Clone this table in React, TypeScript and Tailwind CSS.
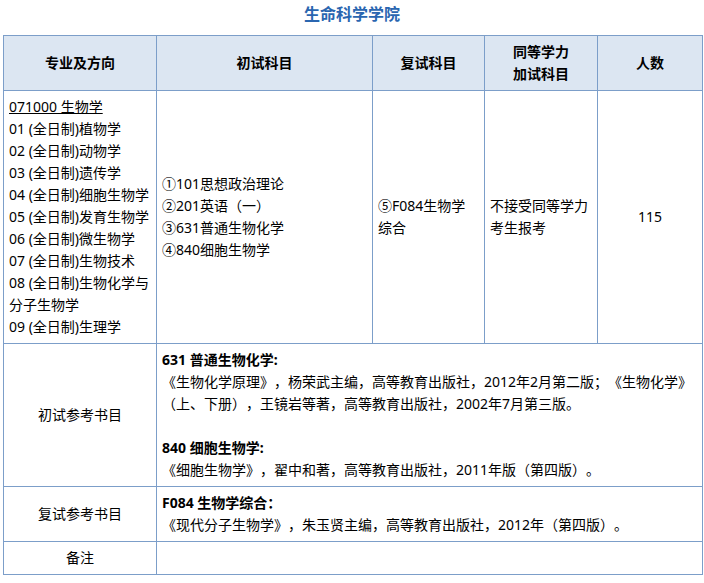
const majors = [
  "01 (全日制)植物学",
  "02 (全日制)动物学",
  "03 (全日制)遗传学",
  "04 (全日制)细胞生物学",
  "05 (全日制)发育生物学",
  "06 (全日制)微生物学",
  "07 (全日制)生物技术",
  "08 (全日制)生物化学与",
  "分子生物学",
  "09 (全日制)生理学",
];

const exams = ["①101思想政治理论", "②201英语（一）", "③631普通生物化学", "④840细胞生物学"];

const cell = "border border-[#7c9ec9] px-[5px] py-[5px] align-middle";

const App = () => {
  return (
    <div
      className="w-[704px] h-[583px] bg-white text-black text-[14px] leading-[22px] [text-spacing-trim:space-all]"
      style={{ fontFamily: '"Noto Sans", "Noto Sans CJK SC", sans-serif' }}
    >
      {/* Title */}
      <div className="h-[35px] text-center text-[16px] leading-[28px] font-bold text-[#2a66b0]">
        生命科学学院
      </div>

      <table className="ml-[3px] w-[699px] table-fixed border-collapse">
        <colgroup>
          <col className="w-[153px]" />
          <col className="w-[216px]" />
          <col className="w-[112px]" />
          <col className="w-[113px]" />
          <col className="w-[105px]" />
        </colgroup>
        <thead>
          <tr className="bg-[#dce6f2] font-bold text-center">
            <th className={`${cell} font-bold`}>专业及方向</th>
            <th className={`${cell} font-bold`}>初试科目</th>
            <th className={`${cell} font-bold`}>复试科目</th>
            <th className={`${cell} font-bold`}>
              同等学力
              <br />
              加试科目
            </th>
            <th className={`${cell} font-bold`}>人数</th>
          </tr>
        </thead>
        <tbody>
          <tr>
            <td className={`${cell} align-top`}>
              <div className="underline whitespace-nowrap">071000 生物学</div>
              {majors.map((m) => (
                <div key={m} className="whitespace-nowrap">
                  {m}
                </div>
              ))}
            </td>
            <td className={cell}>
              {exams.map((e) => (
                <div key={e} className="whitespace-nowrap">
                  {e}
                </div>
              ))}
            </td>
            <td className={cell}>
              ⑤F084生物学
              <br />
              综合
            </td>
            <td className={cell}>
              不接受同等学力
              <br />
              考生报考
            </td>
            <td className={`${cell} text-center`}>115</td>
          </tr>

          <tr>
            <td className={`${cell} text-center`}>初试参考书目</td>
            <td className={cell} colSpan={4}>
              <div className="font-bold">631 普通生物化学:</div>
              <div className="whitespace-nowrap">
                《生物化学原理》，杨荣武主编，高等教育出版社，2012年2月第二版；《生物化学》
              </div>
              <div className="whitespace-nowrap">（上、下册），王镜岩等著，高等教育出版社，2002年7月第三版。</div>
              <div className="h-[22px]" />
              <div className="font-bold">840 细胞生物学:</div>
              <div className="whitespace-nowrap">《细胞生物学》，翟中和著，高等教育出版社，2011年版（第四版）。</div>
            </td>
          </tr>

          <tr>
            <td className={`${cell} text-center`}>复试参考书目</td>
            <td className={cell} colSpan={4}>
              <div className="font-bold">F084 生物学综合：</div>
              <div className="whitespace-nowrap">《现代分子生物学》，朱玉贤主编，高等教育出版社，2012年（第四版）。</div>
            </td>
          </tr>

          <tr>
            <td className={`${cell} text-center`}>备注</td>
            <td className={cell} colSpan={4}>
              <div className="h-[22px]" />
            </td>
          </tr>
        </tbody>
      </table>
    </div>
  );
};

export default App;
